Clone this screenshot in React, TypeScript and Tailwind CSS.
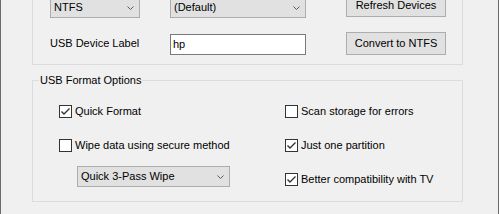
const FONT = "font-['Liberation_Sans',Arial,sans-serif] text-[11px] leading-[13px] text-black";

function Chevron() {
  return (
    <svg width="7" height="4" viewBox="0 0 7 4" className="shrink-0">
      <polyline points="0.5,0.5 3.5,3.5 6.5,0.5" fill="none" stroke="#5a5a5a" strokeWidth="1" />
    </svg>
  );
}

function Combo({ value, className }: { value: string; className: string }) {
  return (
    <div
      className={`flex h-[21px] items-center justify-between border border-[#adadad] bg-[#e1e1e1] pl-[3px] pr-[5px] ${className}`}
    >
      <span>{value}</span>
      <Chevron />
    </div>
  );
}

function Button({ label, className = "" }: { label: string; className?: string }) {
  return (
    <div
      className={`flex h-[23px] w-[100px] items-center justify-center border border-[#adadad] bg-[#e1e1e1] ${className}`}
    >
      {label}
    </div>
  );
}

function Check({ label, checked, className = "" }: { label: string; checked?: boolean; className?: string }) {
  return (
    <div className={`flex h-[13px] items-center gap-[3px] ${className}`}>
      <div className="h-[13px] w-[13px] shrink-0 border border-[#333333] bg-white">
        {checked && (
          <svg width="11" height="11" viewBox="0 0 11 11">
            <polyline points="1.5,5.5 4,8 9.5,2.5" fill="none" stroke="#333333" strokeWidth="1.4" />
          </svg>
        )}
      </div>
      <span className="whitespace-nowrap">{label}</span>
    </div>
  );
}

export default function App() {
  return (
    <div className={`h-[214px] w-[499px] overflow-hidden border-x border-[#6b6b6b] bg-[#f0f0f0] ${FONT}`}>
      <div className="pl-[31px]">
        {/* drive options panel, top cut off */}
        <div className="h-[65px] w-[431px] border-x border-b border-[#dcdcdc] pl-[17px]">
          <div className="flex items-start">
            <Combo value="NTFS" className="-mt-[3px] w-[90px]" />
            <Combo value="(Default)" className="-mt-[3px] ml-[30px] w-[136px]" />
            <Button label="Refresh Devices" className="-mt-[6px] ml-[40px]" />
          </div>
          <div className="mt-[14px] flex h-[23px] items-end">
            <span className="w-[120px] self-center">USB Device Label</span>
            <div className="flex h-[21px] w-[136px] items-center border border-[#7a7a7a] bg-white pl-[2px]">hp</div>
            <Button label="Convert to NTFS" className="ml-[40px]" />
          </div>
        </div>

        {/* format options group */}
        <div className="relative mt-[15px] h-[122px] w-[431px] border border-[#dcdcdc]">
          <span className="absolute -top-[7px] left-[6px] bg-[#f0f0f0] px-[1px]">USB Format Options</span>
          <div className="flex pl-[26px] pt-[24px]">
            <div className="flex w-[226px] flex-col">
              <Check label="Quick Format" checked />
              <Check label="Wipe data using secure method" className="mt-[21px]" />
              <Combo value="Quick 3-Pass Wipe" className="ml-[18px] mt-[14px] w-[153px]" />
            </div>
            <div className="flex flex-col">
              <Check label="Scan storage for errors" />
              <Check label="Just one partition" checked className="mt-[21px]" />
              <Check label="Better compatibility with TV" checked className="mt-[21px]" />
            </div>
          </div>
        </div>
      </div>
    </div>
  );
}
